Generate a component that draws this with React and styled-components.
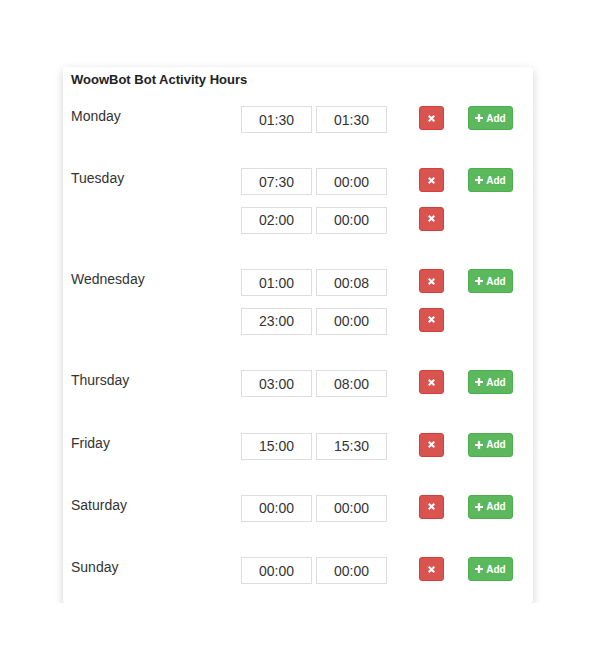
import React from 'react';
import styled, { createGlobalStyle } from 'styled-components';

const GlobalStyle = createGlobalStyle`
  body {
    margin: 0;
    background: #fff;
    font-family: "Liberation Sans", Arial, sans-serif;
    color: #333;
  }
`;

const Page = styled.div`
  padding: 67px 0 0 63px;
`;

const Card = styled.div`
  width: 470px;
  box-sizing: border-box;
  padding: 5px 0 19px 8px;
  background: #fff;
  border-radius: 3px;
  box-shadow: 0 3px 10px rgba(0, 0, 0, 0.18);
`;

const Title = styled.h3`
  margin: 0 0 18px;
  font-size: 13px;
  line-height: 16px;
  font-weight: bold;
  color: #222;
`;

const DayList = styled.div`
  display: flex;
  flex-direction: column;
  gap: 35.4px;
`;

const Day = styled.div`
  display: flex;
  align-items: flex-start;
`;

const DayName = styled.div`
  width: 170px;
  font-size: 14px;
  line-height: 20px;
  color: #333;
`;

const Slots = styled.div`
  display: flex;
  flex-direction: column;
  gap: 11.5px;
`;

const Slot = styled.div`
  display: flex;
  align-items: flex-start;
`;

const TimeInput = styled.input`
  box-sizing: border-box;
  width: 71px;
  height: 27px;
  margin-right: ${(p) => (p.$first ? '4px' : '32px')};
  padding: 0;
  border: 1px solid #ddd;
  border-radius: 0;
  font-family: "Liberation Sans", Arial, sans-serif;
  font-size: 14px;
  color: #333;
  text-align: center;
  background: #fff;
  outline: none;
`;

const Button = styled.button`
  box-sizing: border-box;
  height: 24px;
  padding: 0;
  border-radius: 3px;
  border: 1px solid ${(p) => (p.$variant === 'add' ? '#4cae4c' : '#d43f3a')};
  background: ${(p) => (p.$variant === 'add' ? '#5cb85c' : '#d9534f')};
  color: #fff;
  display: flex;
  align-items: center;
  justify-content: center;
  gap: 3px;
  font-family: "Liberation Sans", Arial, sans-serif;
  font-size: 10px;
  font-weight: bold;
  cursor: pointer;
`;

const DeleteButton = styled(Button)`
  width: 25px;
`;

const AddButton = styled(Button)`
  width: 45px;
  margin-left: 24px;
`;

const Icon = styled.svg`
  width: ${(p) => p.$size}px;
  height: ${(p) => p.$size}px;
  fill: #fff;
`;

const TimesIcon = () => (
  <Icon $size={7} viewBox="0 0 10 10">
    <path d="M2 0 L5 3 L8 0 L10 2 L7 5 L10 8 L8 10 L5 7 L2 10 L0 8 L3 5 L0 2 Z" />
  </Icon>
);

const PlusIcon = () => (
  <Icon $size={8} viewBox="0 0 10 10">
    <path d="M3.6 0 H6.4 V3.6 H10 V6.4 H6.4 V10 H3.6 V6.4 H0 V3.6 H3.6 Z" />
  </Icon>
);

const schedule = [
  { day: 'Monday', slots: [['01:30', '01:30']] },
  { day: 'Tuesday', slots: [['07:30', '00:00'], ['02:00', '00:00']] },
  { day: 'Wednesday', slots: [['01:00', '00:08'], ['23:00', '00:00']] },
  { day: 'Thursday', slots: [['03:00', '08:00']] },
  { day: 'Friday', slots: [['15:00', '15:30']] },
  { day: 'Saturday', slots: [['00:00', '00:00']] },
  { day: 'Sunday', slots: [['00:00', '00:00']] },
];

const App = () => {
  return (
    <Page>
      <GlobalStyle />
      <Card>
        <Title>WoowBot Bot Activity Hours</Title>
        <DayList>
          {schedule.map((d) => (
            <Day key={d.day}>
              <DayName>{d.day}</DayName>
              <Slots>
                {d.slots.map(([from, to], i) => (
                  <Slot key={i}>
                    <TimeInput $first defaultValue={from} />
                    <TimeInput defaultValue={to} />
                    <DeleteButton>
                      <TimesIcon />
                    </DeleteButton>
                    {i === 0 && (
                      <AddButton $variant="add">
                        <PlusIcon />
                        Add
                      </AddButton>
                    )}
                  </Slot>
                ))}
              </Slots>
            </Day>
          ))}
        </DayList>
      </Card>
    </Page>
  );
};

export default App;
